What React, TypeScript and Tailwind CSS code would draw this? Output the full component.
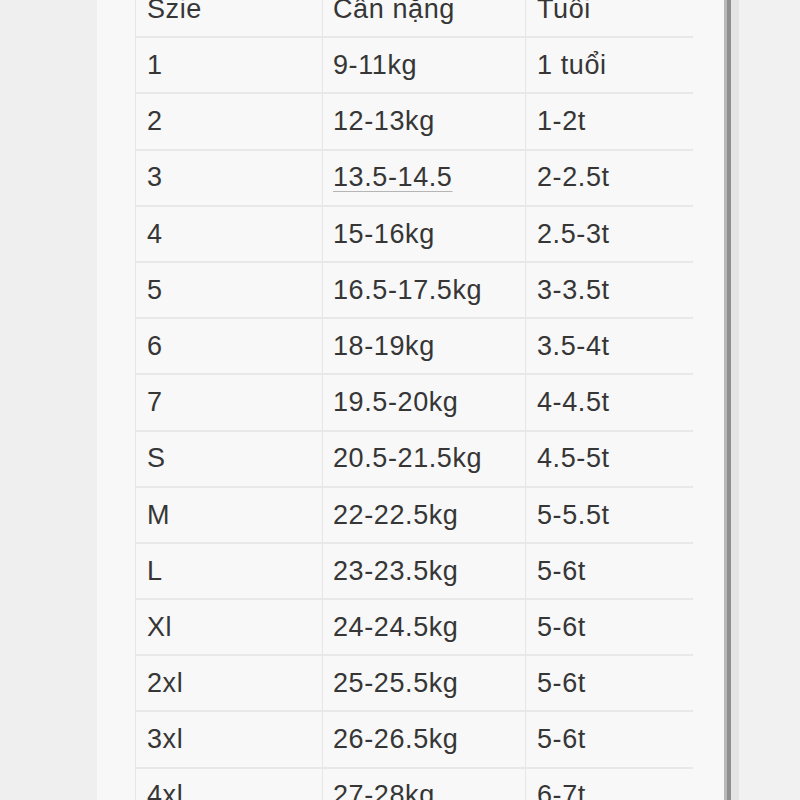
const rows: [string, string, string][] = [
  ["Szie", "Cân nặng", "Tuổi"],
  ["1", "9-11kg", "1 tuổi"],
  ["2", "12-13kg", "1-2t"],
  ["3", "13.5-14.5", "2-2.5t"],
  ["4", "15-16kg", "2.5-3t"],
  ["5", "16.5-17.5kg", "3-3.5t"],
  ["6", "18-19kg", "3.5-4t"],
  ["7", "19.5-20kg", "4-4.5t"],
  ["S", "20.5-21.5kg", "4.5-5t"],
  ["M", "22-22.5kg", "5-5.5t"],
  ["L", "23-23.5kg", "5-6t"],
  ["Xl", "24-24.5kg", "5-6t"],
  ["2xl", "25-25.5kg", "5-6t"],
  ["3xl", "26-26.5kg", "5-6t"],
  ["4xl", "27-28kg", "6-7t"],
];

export default function App() {
  return (
    <div className="flex h-[800px] w-[800px] overflow-hidden bg-[#efefef] font-['Liberation_Sans',Arial,sans-serif] text-[27px] tracking-[0.6px] text-[#363636]">
      <div className="w-[97px] shrink-0" />
      <div className="w-[627px] shrink-0 bg-[#f8f8f8] pl-[38px]">
        <div className="-mt-[18px] w-[558px] border-l border-[#e6e6e6]">
          {rows.map((r, i) => (
            <div key={i} className="grid h-[56.2px] grid-cols-[187px_203px_168px] border-b-2 border-[#e8e8e8]">
              <div className="flex items-center border-r border-[#e6e6e6] pl-[11px]">{r[0]}</div>
              <div className="flex items-center border-r border-[#e6e6e6] pl-[10px]">
                {r[1] === "13.5-14.5" ? (
                  <span className="underline decoration-[#b5b5b5] decoration-1 underline-offset-[5px]">{r[1]}</span>
                ) : (
                  r[1]
                )}
              </div>
              <div className="flex items-center pl-[11px]">{r[2]}</div>
            </div>
          ))}
        </div>
      </div>
      <div className="w-[3px] shrink-0 bg-[#b9b9b9]" />
      <div className="w-[4px] shrink-0 bg-[#8f8f8f]" />
      <div className="w-[8px] shrink-0 bg-[#e4e4e4]" />
      <div className="flex-1 bg-[#f1f1f1]" />
    </div>
  );
}
